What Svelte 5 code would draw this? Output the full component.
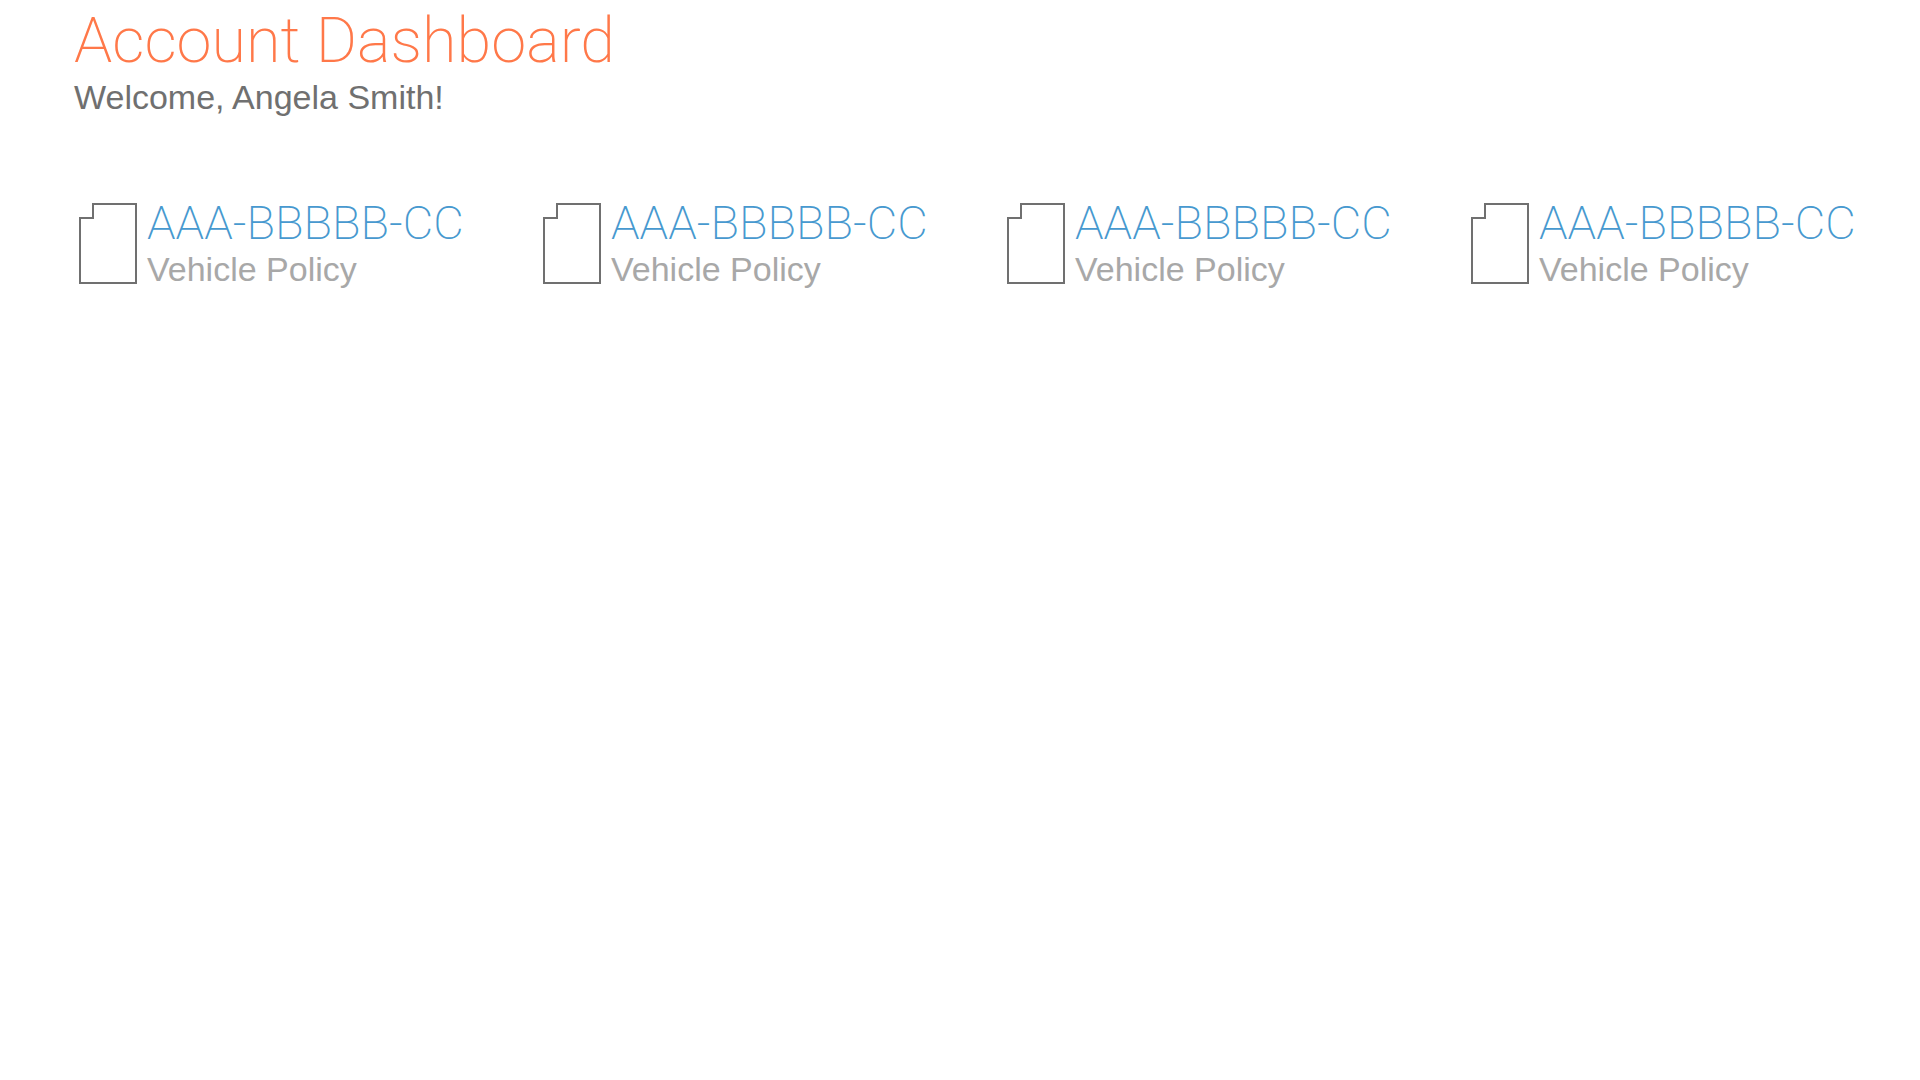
<script>
  const policies = Array.from({ length: 4 }, (_, id) => ({
    id,
    number: 'AAA-BBBBB-CC',
    type: 'Vehicle Policy'
  }));
</script>

<main>
  <header>
    <h1>Account Dashboard</h1>
    <p>Welcome, Angela Smith!</p>
  </header>

  <section class="policies" aria-label="Policies">
    {#each policies as policy (policy.id)}
      <article>
        <svg class="document" viewBox="0 0 58 81" aria-hidden="true">
          <path d="M1 80V15H14V1H57V80Z" />
        </svg>
        <div>
          <a href="#policy">{policy.number}</a>
          <p>{policy.type}</p>
        </div>
      </article>
    {/each}
  </section>
</main>

<style>
  :global(body) {
    margin: 0;
    background: #fff;
  }

  main {
    font-family: 'Liberation Sans', Arial, sans-serif;
    font-size: 34px;
    color: #707070;
  }

  h1,
  p {
    margin: 0;
  }

  header {
    padding: 0 74px;
    line-height: 30px;
  }

  h1,
  a {
    font-family: Roboto, sans-serif;
    font-weight: 200;
  }

  h1 {
    font-size: 63px;
    line-height: 82px;
    color: #ff7849;
  }

  .policies {
    display: grid;
    grid-template-columns: repeat(4, 1fr);
    padding-left: 64px;
    margin-top: 91px;
    line-height: 52px;
  }

  article {
    display: flex;
    align-items: flex-start;
    gap: 10px;
    padding-left: 15px;
  }

  .document {
    flex: none;
    width: 58px;
    height: 81px;
    fill: none;
    stroke: #707070;
    stroke-width: 2;
  }

  a {
    display: block;
    font-size: 47px;
    line-height: 40px;
    color: #4799cf;
    text-decoration: none;
    white-space: nowrap;
  }

  article p {
    color: #a8a8a8;
  }
</style>
